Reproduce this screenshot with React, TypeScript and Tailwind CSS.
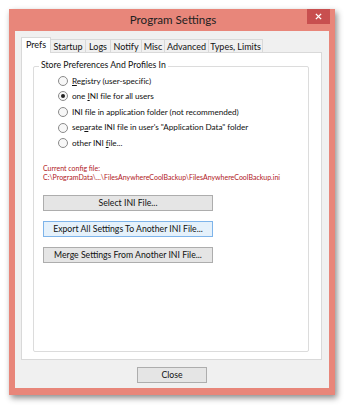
import React from 'react';

const font = { fontFamily: 'Lato, "Open Sans", "Liberation Sans", sans-serif' };

const Radio = ({ checked, children }: { checked?: boolean; children: React.ReactNode }) => (
  <div className="flex items-center h-[15.6px] gap-[4px] whitespace-nowrap">
    <span className="w-[10px] h-[10px] rounded-full border border-[#8a8a8a] bg-[#f7f7f7] flex items-center justify-center">
      {checked && <span className="w-[4px] h-[4px] rounded-full bg-[#222]" />}
    </span>
    <span className="text-[8.2px] tracking-[-0.05px] text-[#111] leading-none">{children}</span>
  </div>
);

const Btn = ({ children, focused, className = '' }: { children: React.ReactNode; focused?: boolean; className?: string }) => (
  <div
    className={`h-[16px] flex items-center justify-center whitespace-nowrap text-[8.7px] text-[#111] border ${
      focused ? 'border-[#7eb4ea] bg-[#e5f1fb]' : 'border-[#adadad] bg-[#e5e5e5]'
    } ${className}`}
  >
    {children}
  </div>
);

const tabs = ['Startup', 'Logs', 'Notify', 'Misc', 'Advanced', 'Types, Limits'];
const tabW = [35, 25, 31, 23, 44, 54];

export default function App() {
  return (
    <div className="w-[350px] h-[411px] bg-white pt-[9px] pl-[9px]" style={font}>
      <div className="w-[326px] h-[386px] bg-[#e8867a] flex flex-col shadow-[2px_3px_6px_rgba(0,0,0,0.45)]">
        <div className="h-[22px] relative flex items-center justify-center">
          <span className="text-[11.6px] text-[#222] pl-[2px]">Program Settings</span>
          <div className="absolute right-[5px] top-0 w-[23px] h-[15px] bg-[#c84f4f] flex items-center justify-center">
            <svg width="7" height="7" viewBox="0 0 8 8">
              <path d="M1 1L7 7M7 1L1 7" stroke="#fff" strokeWidth="1.6" />
            </svg>
          </div>
        </div>
        <div className="mx-[6px] h-[357px] bg-[#f0f0f0] px-[6px] pt-[6px] flex flex-col">
          <div className="flex items-end h-[15px]">
            <div className="w-[30px] h-[16px] -mb-px relative z-10 bg-white border border-b-0 border-[#d9d9d9] text-[9px] text-[#111] flex items-start justify-center pt-[2px] leading-none">
              Prefs
            </div>
            {tabs.map((t, i) => (
              <div
                key={t}
                className="h-[13px] bg-[#f0f0f0] border border-b-0 border-l-0 border-[#d9d9d9] text-[9px] text-[#111] flex items-center justify-center leading-none whitespace-nowrap"
                style={{ width: tabW[i] }}
              >
                {t}
              </div>
            ))}
          </div>
          <div className="w-[301px] h-[308px] bg-white border border-[#d9d9d9] pt-[12px] pl-[11px] pr-[12px]">
            <div className="relative h-[286px] border border-[#dcdcdc] rounded-[2px] mt-[1px]">
              <span className="absolute -top-[6px] left-[5px] bg-white px-[2px] text-[8.7px] text-[#111] leading-none whitespace-nowrap">
                Store Preferences And Profiles In
              </span>
              <div className="pt-[6px] pl-[24px] flex flex-col">
                <Radio><u>R</u>egistry (user-specific)</Radio>
                <Radio checked>one <u>I</u>NI file for all users</Radio>
                <Radio>INI file in application folder (not recommended)</Radio>
                <Radio>sep<u>a</u>rate INI file in user's "Application Data" folder</Radio>
                <Radio>other INI <u>f</u>ile...</Radio>
              </div>
              <div className="pl-[9px] pt-[13px] text-[7px] leading-[9px] text-[#b0171c] whitespace-nowrap">
                <div>Current config file:</div>
                <div>C:\ProgramData\...\FilesAnywhereCoolBackup\FilesAnywhereCoolBackup.ini</div>
              </div>
              <div className="pl-[9px] pt-[13px] flex flex-col gap-[10px] w-[179px]">
                <Btn>Select INI File...</Btn>
                <Btn focused>Export All Settings To Another INI File...</Btn>
                <Btn>Merge Settings From Another INI File...</Btn>
              </div>
            </div>
          </div>
          <div className="flex justify-center pt-[7px]">
            <Btn className="w-[70px]">Close</Btn>
          </div>
        </div>
      </div>
    </div>
  );
}
